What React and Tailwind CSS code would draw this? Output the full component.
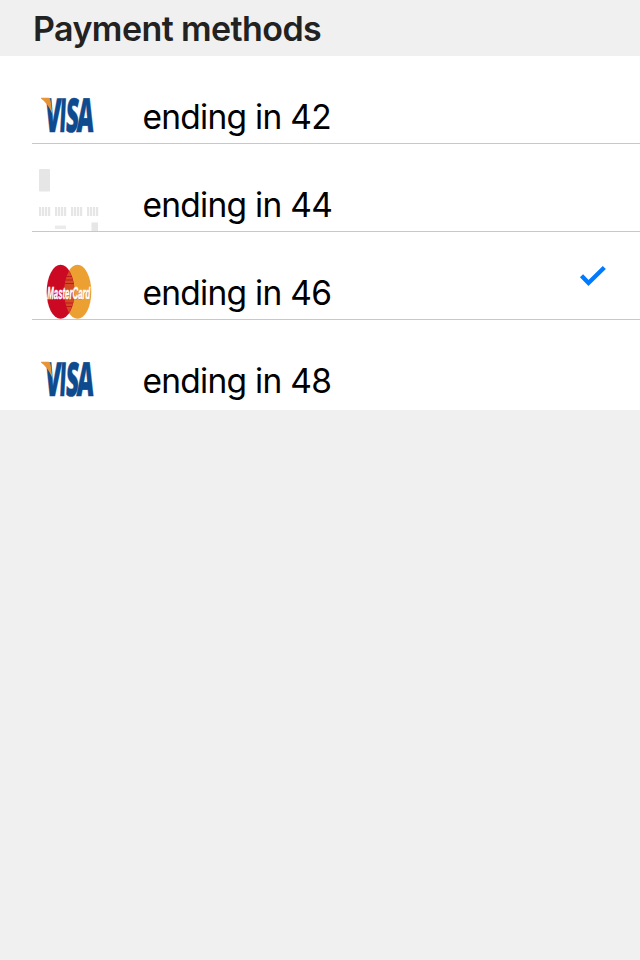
const VISA_LETTERS = [
  { ch: "V", x: 44.6, w: 15.6 },
  { ch: "I", x: 58.8, w: 6.8 },
  { ch: "S", x: 65.2, w: 12.8 },
  { ch: "A", x: 76.3, w: 17 },
];

function VisaLogo() {
  return (
    <svg width="70" height="87" viewBox="32 56 70 87" className="shrink-0 overflow-visible" role="img">
      <g fill="#0e4b8e" stroke="#0e4b8e" strokeWidth="0.5" fontFamily="'Open Sans', 'Liberation Sans', sans-serif" fontWeight="800" fontSize="47">
        {VISA_LETTERS.map(({ ch, x, w }) => (
          <text key={ch} transform={`translate(${x} 132) skewX(-3)`} textLength={w} lengthAdjust="spacingAndGlyphs">{ch}</text>
        ))}
      </g>
      <path d="M41 97.8H48.5Q50.2 97.8 50.6 100.5L52.4 114Q47.5 103 41 98.5Z" fill="#e79436" />
    </svg>
  );
}

const GROUPS = [39, 55, 71, 87];
const BARS = [0, 3, 6, 9];

function GenericCard() {
  return (
    <svg width="70" height="87" viewBox="32 144 70 87" className="shrink-0" role="img">
      <g fill="#e6e6e6">
        <rect x="39" y="169" width="11" height="22.5" rx="1" />
        <rect x="91.5" y="222.5" width="6.5" height="9" />
        <rect x="55" y="225.5" width="11" height="3.5" fill="#ebebeb" />
        {GROUPS.map((g) =>
          BARS.map((b) => <rect key={g + b} x={g + b} y="207" width="2.2" height="9" fill="#e6e6e6" />)
        )}
      </g>
    </svg>
  );
}

function MasterCardLogo() {
  return (
    <svg width="70" height="87" viewBox="32 232 70 87" className="shrink-0 overflow-visible" role="img">
      <ellipse cx="77.5" cy="291.8" rx="13.8" ry="27" fill="#eda032" />
      <ellipse cx="60.6" cy="291.8" rx="13.9" ry="27" fill="#cc0922" />
      <path d="M69 271Q64.2 280 64.2 291.8Q64.2 304 69 313Q74.4 304 74.4 291.8Q74.4 280 69 271Z" fill="#d44a25" />
      <path d="M66 276.5H72M65 280H73M64.5 283.5H74M65 303H73M66 306.5H72" stroke="#bd1a20" strokeWidth="1.2" />
      <g fontFamily="'Liberation Sans', sans-serif" fontWeight="700" fontStyle="italic" fontSize="16">
        <text x="47.5" y="299.8" fill="#8f1b18" fillOpacity="0.4" textLength="43" lengthAdjust="spacingAndGlyphs">MasterCard</text>
        <text x="47.3" y="299" fill="#fff" stroke="#fff" strokeOpacity="0.6" strokeWidth="0.9" textLength="43" lengthAdjust="spacingAndGlyphs">MasterCard</text>
      </g>
    </svg>
  );
}

function Check() {
  return (
    <svg width="28" height="24" viewBox="579 264 28 24" className="mt-8 mr-[33px] ml-auto shrink-0" fill="none" role="img">
      <path d="M581.5 275.8L588.5 283L604.3 267.5" stroke="#007aff" strokeWidth="4.4" />
    </svg>
  );
}

const METHODS = [
  { Logo: VisaLogo, label: "ending in 42" },
  { Logo: GenericCard, label: "ending in 44" },
  { Logo: MasterCardLogo, label: "ending in 46", selected: true },
  { Logo: VisaLogo, label: "ending in 48" },
];

export default function App() {
  return (
    <main className="h-[960px] w-[640px] overflow-hidden bg-[#f0f0f0] font-['Inter','Liberation_Sans',sans-serif]">
      <h1 className="h-14 pt-[9px] pl-[33px] text-[34px] leading-10 font-semibold tracking-[-0.58px] text-[#222]">Payment methods</h1>
      <ul className="h-[354px] bg-white pl-8">
        {METHODS.map(({ Logo, label, selected }) => (
          <li key={label} className="flex h-[88px] items-start border-b border-[#c8c7cc] last:border-0">
            <Logo />
            <span className="mt-[41px] ml-[40.5px] text-[33.5px] leading-10 tracking-[-0.75px] [word-spacing:0.1px] whitespace-nowrap text-black">{label}</span>
            {selected && <Check />}
          </li>
        ))}
      </ul>
    </main>
  );
}
